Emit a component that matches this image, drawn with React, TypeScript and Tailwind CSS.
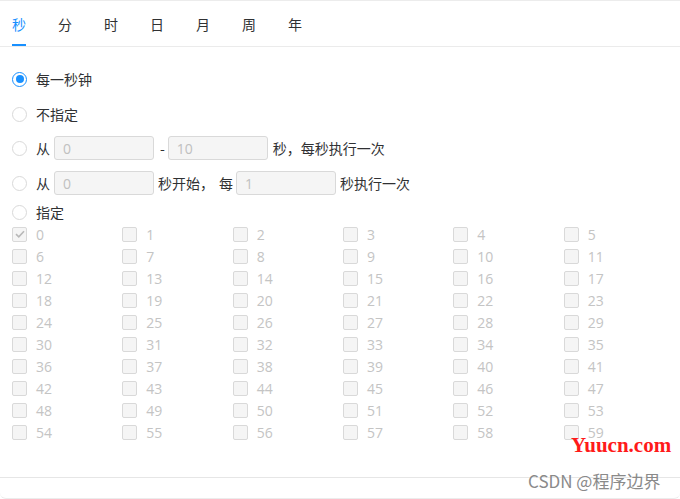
import React from "react";

const tabs = ["秒", "分", "时", "日", "月", "周", "年"];

function Radio({ checked = false }: { checked?: boolean }) {
  return (
    <span
      className={
        "flex h-[15px] w-[15px] shrink-0 items-center justify-center rounded-full border bg-white " +
        (checked ? "border-[#1890ff]" : "border-[#d9d9d9]")
      }
    >
      {checked && <span className="h-[8px] w-[8px] rounded-full bg-[#1890ff]" />}
    </span>
  );
}

function Input({ value }: { value: string }) {
  return (
    <span className="flex h-[24px] w-[100px] shrink-0 items-center rounded-[3px] border border-[#d9d9d9] bg-[#f5f5f5] pl-[8px] text-[14px] text-[#c0c0c0] [font-family:'Open_Sans',sans-serif]">
      {value}
    </span>
  );
}

function Check({ n }: { n: number }) {
  return (
    <div className="flex h-[22px] items-center">
      <span className="flex h-[15px] w-[15px] shrink-0 items-center justify-center rounded-[2px] border border-[#d9d9d9] bg-[#f5f5f5]">
        {n === 0 && (
          <svg width="10" height="8" viewBox="0 0 10 8" fill="none">
            <path d="M1 4.2 L3.8 6.8 L9 1.2" stroke="#b8b8b8" strokeWidth="1.6" />
          </svg>
        )}
      </span>
      <span className="ml-[9px] text-[14px] text-[#c4c4c4] [font-family:'Open_Sans',sans-serif]">{n}</span>
    </div>
  );
}

export default function App() {
  const nums = Array.from({ length: 60 }, (_, i) => i);
  return (
    <div
      className="relative h-[499px] w-[680px] overflow-hidden bg-white text-[14px] text-[#303133]"
      style={{ fontFamily: "'Noto Sans CJK SC', 'Open Sans', sans-serif" }}
    >
      <div className="flex h-[499px] flex-col rounded-b-[6px] border-t border-b border-[#ececec]">
        {/* tabs */}
        <div className="flex h-[46px] shrink-0 items-end border-b border-[#ebebeb] pl-[12px]">
          {tabs.map((t, i) => (
            <div key={t} className="mr-[32px] flex h-[45px] flex-col items-center">
              <span
                className={
                  "mt-[13px] leading-[20px] " + (i === 0 ? "text-[#1890ff]" : "text-[#303133]")
                }
              >
                {t}
              </span>
              <span className={"mt-auto h-[2px] w-[14px] " + (i === 0 ? "bg-[#1890ff]" : "bg-transparent")} />
            </div>
          ))}
        </div>

        {/* body */}
        <div className="flex flex-col px-[12px] pt-[20px]">
          <div className="flex h-[24px] items-center">
            <Radio checked />
            <span className="ml-[9px]">每一秒钟</span>
          </div>
          <div className="mt-[11px] flex h-[24px] items-center">
            <Radio />
            <span className="ml-[9px]">不指定</span>
          </div>
          <div className="mt-[10px] flex h-[24px] items-center">
            <Radio />
            <span className="ml-[9px]">从</span>
            <span className="ml-[4px]"><Input value="0" /></span>
            <span className="ml-[6px]">-</span>
            <span className="ml-[3px]"><Input value="10" /></span>
            <span className="ml-[5px]">秒，每秒执行一次</span>
          </div>
          <div className="mt-[11px] flex h-[24px] items-center">
            <Radio />
            <span className="ml-[9px]">从</span>
            <span className="ml-[4px]"><Input value="0" /></span>
            <span className="ml-[4px]">秒开始，</span>
            <span className="ml-[5px]">每</span>
            <span className="ml-[3px]"><Input value="1" /></span>
            <span className="ml-[4px]">秒执行一次</span>
          </div>
          <div className="mt-[5px] flex h-[24px] items-center">
            <Radio />
            <span className="ml-[9px]">指定</span>
          </div>
          <div className="-mt-[1px] grid w-[662px] grid-cols-6">
            {nums.map((n) => (
              <Check key={n} n={n} />
            ))}
          </div>
        </div>

        <div className="mt-auto h-[21px] border-t border-[#e6e6e6]" />
      </div>

      {/* watermarks */}
      <span
        className="absolute left-[571px] top-[432px] text-[21px] font-bold leading-[26px] text-[#ff1a1a]"
        style={{ fontFamily: "'Liberation Serif', serif" }}
      >
        Yuucn.com
      </span>
      <span
        className="absolute left-[528px] top-[469px] text-[17px] leading-[24px] text-[#8a8a8a]"
        style={{ fontFamily: "'Noto Sans CJK SC', 'Liberation Sans', sans-serif", textShadow: "0 0 2px #fff" }}
      >
        CSDN @程序边界
      </span>
    </div>
  );
}
